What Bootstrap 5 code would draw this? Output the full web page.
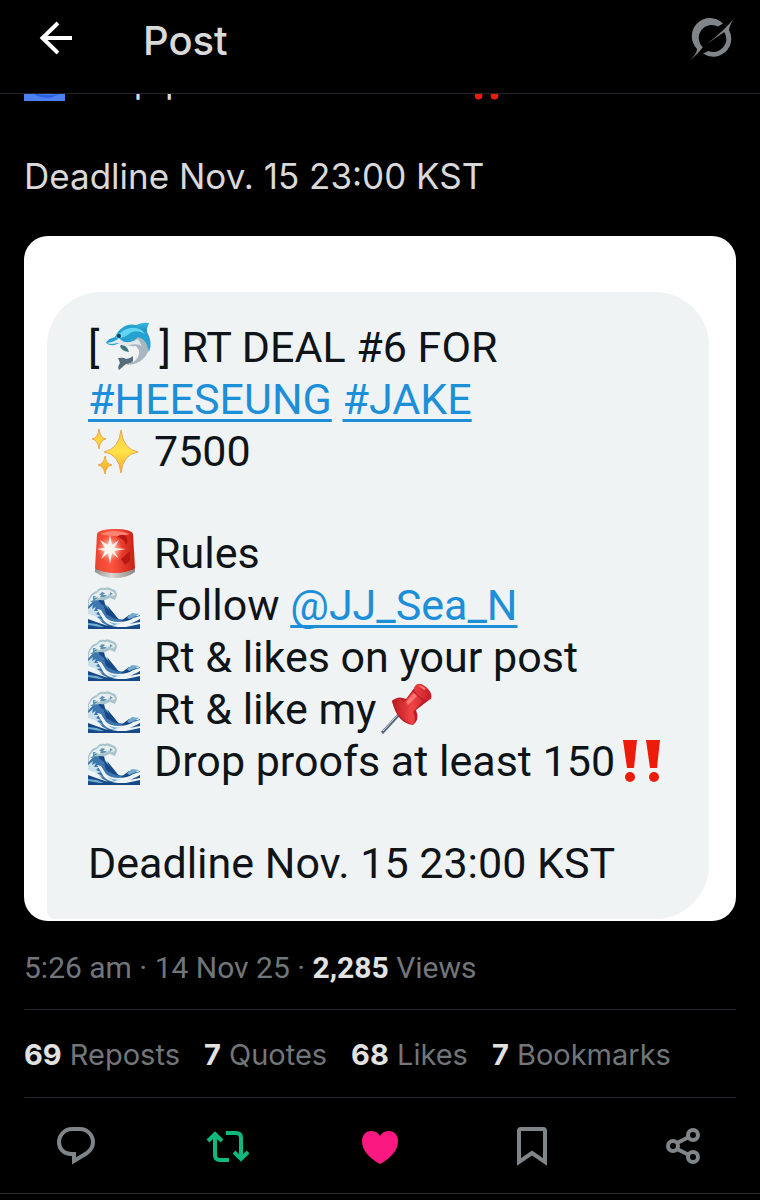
<!DOCTYPE html>
<html lang="en">
<head>
<meta charset="utf-8">
<meta name="viewport" content="width=device-width, initial-scale=1">
<title>Post</title>
<link href="https://cdn.jsdelivr.net/npm/bootstrap@5.3.0/dist/css/bootstrap.min.css" rel="stylesheet">
<style>
  body { background: #000; color: #d9d9d9; font-family: Roboto, "Liberation Sans", sans-serif; }
  svg { flex: none; }
  .topbar { background: #000; border-bottom: 1px solid #202327; height: 94px; padding: 0 24px 16px 36px; z-index: 10; }
  .topbar h1 { font-family: Inter, "Liberation Sans", sans-serif; font-size: 40px; font-weight: 500; line-height: 48px; margin-left: 67px; padding-top: 4px; }
  .icon-btn { background: none; border: 0; padding: 0; line-height: 0; color: #fff; }
  .post-body { padding: 0 24px; }
  .post-text { font-family: Inter, "Liberation Sans", sans-serif; font-size: 35px; line-height: 48px; }
  .post-text .emoji { margin-right: 10px; }
  .cut-line { height: 10px; overflow: hidden; }
  .gap-line { height: 48px; }
  .media { background: #fff; border-radius: 24px; margin-top: 36px; padding: 56px 27px 2px 23px; }
  .bubble { background: #eff3f4; color: #0f1419; border-radius: 54px 54px 54px 8px; padding: 29px 10px 30px 41px; font-size: 43px; line-height: 52px; }
  .bubble .line { height: 52px; white-space: pre; }
  .bubble .blank { height: 50px; }
  .bubble a { color: #1d8fd8; text-decoration: underline; text-decoration-thickness: 3px; text-underline-offset: 5px; text-decoration-skip-ink: none; }
  .bubble .emoji { margin-right: 14px; }
  .bubble .wave { margin-top: 6px; }
  .meta, .stats { line-height: 38px; color: #71767b; }
  .meta { font-size: 30px; padding: 28px 0 22px; white-space: pre; }
  .stats { font-family: Inter, "Liberation Sans", sans-serif; font-size: 29px; border-top: 1px solid #202327; border-bottom: 1px solid #202327; padding: 26px 0 23px; gap: 24px; }
  .stats a { color: inherit; text-decoration: none; }
  .meta b, .stats b { color: #e2e2e2; font-weight: 700; }
  .actions { border-bottom: 1px solid #2a2c2f; height: 96px; }
  .actions button { color: #80858a; }
</style>
</head>
<body>
<svg width="0" height="0" class="position-absolute" aria-hidden="true">
  <defs>
    <linearGradient id="gFin" x2="0" y2="1"><stop stop-color="#39b8e0"/><stop offset="1" stop-color="#1b8fc2"/></linearGradient>
    <linearGradient id="gStar" x2="0" y2="1"><stop stop-color="#ffc83c"/><stop offset=".5" stop-color="#ffe24a"/><stop offset="1" stop-color="#f5a623"/></linearGradient>
    <linearGradient id="gRed"><stop stop-color="#e8432f"/><stop offset=".4" stop-color="#ff5540"/><stop offset="1" stop-color="#c91f14"/></linearGradient>
    <linearGradient id="gBase"><stop stop-color="#8f8f8f"/><stop offset=".4" stop-color="#d9d6d3"/><stop offset="1" stop-color="#8c8583"/></linearGradient>
    <radialGradient id="gGlow"><stop stop-color="#fff"/><stop offset=".3" stop-color="#ffe3dc" stop-opacity=".9"/><stop offset="1" stop-color="#ff8b78" stop-opacity="0"/></radialGradient>
    <linearGradient id="gPin"><stop stop-color="#b81820"/><stop offset=".5" stop-color="#f04444"/><stop offset="1" stop-color="#c41c26"/></linearGradient>
    <symbol id="wave" viewBox="0 0 52 42">
      <path fill="#a9c4cb" d="M0 13Q3 5 9 4q2-4 8-3 3-2 7 1 5 1 5 6l-2 5-5-2-5 2-7 1-4 5-3 6-3 2z"/>
      <path fill="#e6eef0" d="M1 14Q4 7 9 6q3-4 8-3 3-1 6 1 4 1 4 4l-3 1-3-2-2 2-4-1-3 3-4 0-1 4-4 1-2 4z"/>
      <path fill="#5b93b5" d="M5 9l3 0-2 2 4-1-3 3 3 1-4 2-3 2 1-3-2 0 3-2zM14 5l3 1-2 2 4 0-3 2-4 0 1-2-2 0zM22 5l3 2-3 1z"/>
      <path fill="#3d77ad" d="M0 20q4-6 11-7l5 0 1 4 4 5 6 7q4 5 12 3 7-1 13-4v14H0z"/>
      <path fill="#c9e0ea" d="M0 22l5-4-1 4 4-2-2 4 5 0-3 3 5 2-4 1 6 4-8-2-3-4-4 0z"/>
      <path fill="#174887" d="M11 13l5 1 1 5 4 4-2-5 9 11 3 4-6-2-7-4-2-8-5-4zM0 31q11 0 18 7l10 2q12-1 24-6v8H0zM33 34l8-6 11 2v4l-10 3z"/>
      <path fill="#eef5f7" d="M9 22l4 1 5 8q5 4 12 4 10 0 15-4l7-2v3q-8 5-18 7-13 1-18-5zM0 27l7 2 8 7 5 3-9-3-11-4zM24 40l12-2 16-3v2l-14 3z"/>
      <path fill="#70abd0" d="M0 36l9 1 7 3-4 0-12-2zM39 30l5-4 7 1-5 3-5 2zM19 34q8 4 16 2l-9 2z"/>
    </symbol>
    <symbol id="bangs" viewBox="0 0 38 42">
      <path fill="#ed1c0a" d="M0 0h14l-3 28H4zM23 0h14l-3 28h-7z"/><circle cx="7" cy="37" r="5" fill="#ed1c0a"/><circle cx="31" cy="37" r="5" fill="#ed1c0a"/>
    </symbol>
  </defs>
</svg>

<header class="topbar sticky-top d-flex align-items-center">
  <button class="icon-btn" type="button" aria-label="Back">
    <svg width="40" height="40" viewBox="0 0 40 40" fill="none" stroke="currentColor" stroke-width="4"><path d="M36 19H6M22 4L6.500 19 22 34"/></svg>
  </button>
  <h1 class="mb-0">Post</h1>
  <button class="icon-btn ms-auto" type="button" aria-label="Explain this post">
    <svg width="48" height="48" viewBox="0 0 48 48" fill="#80858a"><path d="M1 46Q9 39 9 34A18 18 0 0 1 35 8.500L30 11.500A13 13 0 0 0 14 31.500L15 32Q10 39 1 46zM15 38.500L20.500 36A13 13 0 0 0 37 18.500Q37 17 35.500 17.500L19 29Q37 15 48 1 42 8 41 15A18 18 0 0 1 15 38.500z"/></svg>
  </button>
</header>

<main>
  <article>
    <div class="post-body">
      <div class="post-text">
        <div class="cut-line d-flex align-items-end">
          <div class="d-flex align-items-center">
            <svg class="emoji" width="41" height="41" viewBox="0 0 41 41"><path fill="#eaf2ff" d="M0 0h41v41H0z"/><path fill="#4d80f0" d="M0 12q18-8 26 4-10 4-3 11 8 5 18 0v14H0z"/><path fill="#2763e4" d="M6 31q14 7 32 2l-12 5q-13 0-20-7z"/></svg>
            <span>Drop proofs at least 150</span>
            <svg class="ms-1 mt-2" width="28" height="33" viewBox="0 0 30 34" fill="#ed1c0a"><path d="M0 0h10L8 22H3zM17 0h10l-2 22h-5z"/><circle cx="6" cy="29" r="4"/><circle cx="23" cy="29" r="4"/></svg>
          </div>
        </div>
        <div class="gap-line"></div>
        <div>Deadline Nov. 15 23:00 KST</div>
      </div>

      <div class="media">
        <div class="bubble">
          <div class="line d-flex align-items-center"><span>[</span><svg class="mx-1" width="52" height="52" viewBox="0 0 52 52">
              <path fill="#566c79" d="M30 40q-2 3-7 3l-7 6q-2-3 1-7l-2-5q6-1 8 1 4 0 7-3z"/>
              <path fill="#a9b6c0" d="M17 21q9 5 16 4 7 7-1 15l-9 4q12 0 19-8 9-12 0-26L25 12z"/>
              <path fill="#25a2cf" d="M3 22q1-4 9-6C17 5 27 1 36 5Q41 2 46 2q-3 6-2 9 6 10 2 20-2-13-11-15-7 8-21 7-6 3-11-1z"/>
              <path fill="#62d5f2" d="M13 17Q21 5 33 7q6 1 9 6-8-5-15-1-6 6-14 5z"/>
              <path fill="url(#gFin)" d="M32 5Q38 1 46 2q-3 5-2 9z"/>
              <path fill="#e2e7ec" d="M4 22q8-1 12-5 6 8 19 1l4 7q-5-3-12-1-7 2-13-2-6 2-10 0z"/>
              <path fill="#3c7580" d="M18 24q6 0 8 7-8-1-9-6z"/><circle cx="16" cy="15" r="2" fill="#173b4d"/>
            </svg><span>] RT DEAL #6 FOR</span></div>
          <div class="line"><a href="#">#HEESEUNG</a> <a href="#">#JAKE</a></div>
          <div class="line d-flex align-items-center"><svg class="emoji" width="52" height="48" viewBox="0 0 52 48" fill="url(#gStar)" stroke="#eaa650">
              <path d="M33 3q2 19 17 22-15 2-17 21-2-19-17-21Q31 22 33 3zM11 2q1 9 7 10-6 1-7 10-1-9-7-10 6-1 7-10zM17 29q1 8 7 9-6 1-7 9-1-8-7-9 6-1 7-9z"/>
            </svg><span>7500</span></div>
          <div class="blank"></div>
          <div class="line d-flex align-items-center"><svg class="emoji" width="52" height="52" viewBox="0 0 52 52">
              <path fill="url(#gBase)" d="M7 40v5q8 6 20 6t20-6v-5z"/><path fill="#6e2522" d="M8 39q18 8 38 0v3q-20 7-38 0z"/>
              <path fill="url(#gRed)" d="M9 7Q11 2 27 2t18 5l2 34q-8 5-20 5T7 41z"/><path fill="#ff8570" d="M12 7q15-6 30 0-14 4-30 0z"/>
              <path fill="#b91812" d="M29 10q4-4 9-1 3 5 0 9-1-6-9-8zM33 32l9-8v10l-5 4z"/>
              <circle cx="22" cy="22" r="13" fill="url(#gGlow)"/><path fill="#fff5ef" d="M22 8l2 10 7-5-5 8 12 1-12 2 5 8-7-6-2 11-2-11-7 6 4-8-8-2 8-1-5-8 8 5z"/>
            </svg><span>Rules</span></div>
          <div class="line d-flex align-items-center"><svg class="emoji wave" width="52" height="42"><use href="#wave"/></svg><span>Follow <a href="#">@JJ_Sea_N</a></span></div>
          <div class="line d-flex align-items-center"><svg class="emoji wave" width="52" height="42"><use href="#wave"/></svg><span>Rt &amp; likes on your post</span></div>
          <div class="line d-flex align-items-center"><svg class="emoji wave" width="52" height="42"><use href="#wave"/></svg><span>Rt &amp; like my</span><svg class="ms-1" width="52" height="52" viewBox="0 0 52 52">
              <path stroke="#56677c" stroke-width="3" d="M2 50l22-24"/><path stroke="#c9d6df" d="M3 48l20-22"/>
              <path fill="#bd1d27" d="M12 18q6-6 14-2l9-12q12 1 14 13L36 27q4 10-3 15-16-2-21-24z"/>
              <path fill="url(#gPin)" d="M12 18q6-5 12 1l9-10 10 9-10 11q4 7 0 13-16-7-21-24zM35 3q4-5 11 1t5 12q-4 3-12-3-7-6-4-10z"/>
              <path fill="#ff7770" d="M26 19l8-9 3 3-9 9zM38 3q4-2 8 3l-2 1q-3-3-6-4z"/>
            </svg></div>
          <div class="line d-flex align-items-center"><svg class="emoji wave" width="52" height="42"><use href="#wave"/></svg><span>Drop proofs at least 150</span><svg class="ms-2" width="38" height="42"><use href="#bangs"/></svg></div>
          <div class="blank"></div>
          <div class="line">Deadline Nov. 15 23:00 KST</div>
        </div>
      </div>

      <div class="meta">5:26 am · 14 Nov 25 · <b>2,285</b> Views</div>
      <div class="stats d-flex">
        <a href="#"><b>69</b> Reposts</a>
        <a href="#"><b>7</b> Quotes</a>
        <a href="#"><b>68</b> Likes</a>
        <a href="#"><b>7</b> Bookmarks</a>
      </div>
    </div>

    <div class="actions d-flex align-items-center">
      <button class="icon-btn flex-fill" type="button" aria-label="Reply"><svg width="44" height="44" viewBox="0 0 44 44" fill="none" stroke="currentColor" stroke-width="4"><path d="M18 5h8c7 0 13 6 13 13 0 5-2 8-6 11l-13 8v-7h-3C10 30 5 25 5 18 5 11 11 5 18 5z"/></svg></button>
      <button class="icon-btn flex-fill" type="button" aria-label="Repost"><svg width="44" height="44" viewBox="0 0 44 44" fill="none" stroke="#0fb87c" stroke-width="4"><path d="M2 17l7-7 7 7M9 11v20q0 5 5 5h9M20 9h10q5 0 5 5v19M28 28l7 7 7-7"/></svg></button>
      <button class="icon-btn flex-fill" type="button" aria-label="Like"><svg width="44" height="44" viewBox="0 0 44 44" fill="#fb1881"><path d="M22 40C11 34 4 26 4 17 4 11 8 7 13 7q6 0 9 5 3-5 9-5c5 0 9 4 9 10 0 9-7 17-18 23z"/></svg></button>
      <button class="icon-btn flex-fill" type="button" aria-label="Bookmark"><svg width="44" height="44" viewBox="0 0 44 44" fill="none" stroke="currentColor" stroke-width="4"><path d="M9 38V7q0-2 2-2h22q2 0 2 2v31L22 29z"/></svg></button>
      <button class="icon-btn flex-fill" type="button" aria-label="Share"><svg width="44" height="44" viewBox="0 0 44 44" fill="none" stroke="currentColor" stroke-width="4"><circle cx="11" cy="22" r="5"/><circle cx="31" cy="11" r="5"/><circle cx="31" cy="33" r="5"/><path d="M15 19l12-6M15 25l12 6"/></svg></button>
    </div>
  </article>
</main>
<script src="https://cdn.jsdelivr.net/npm/bootstrap@5.3.0/dist/js/bootstrap.bundle.min.js"></script>
</body>
</html>
